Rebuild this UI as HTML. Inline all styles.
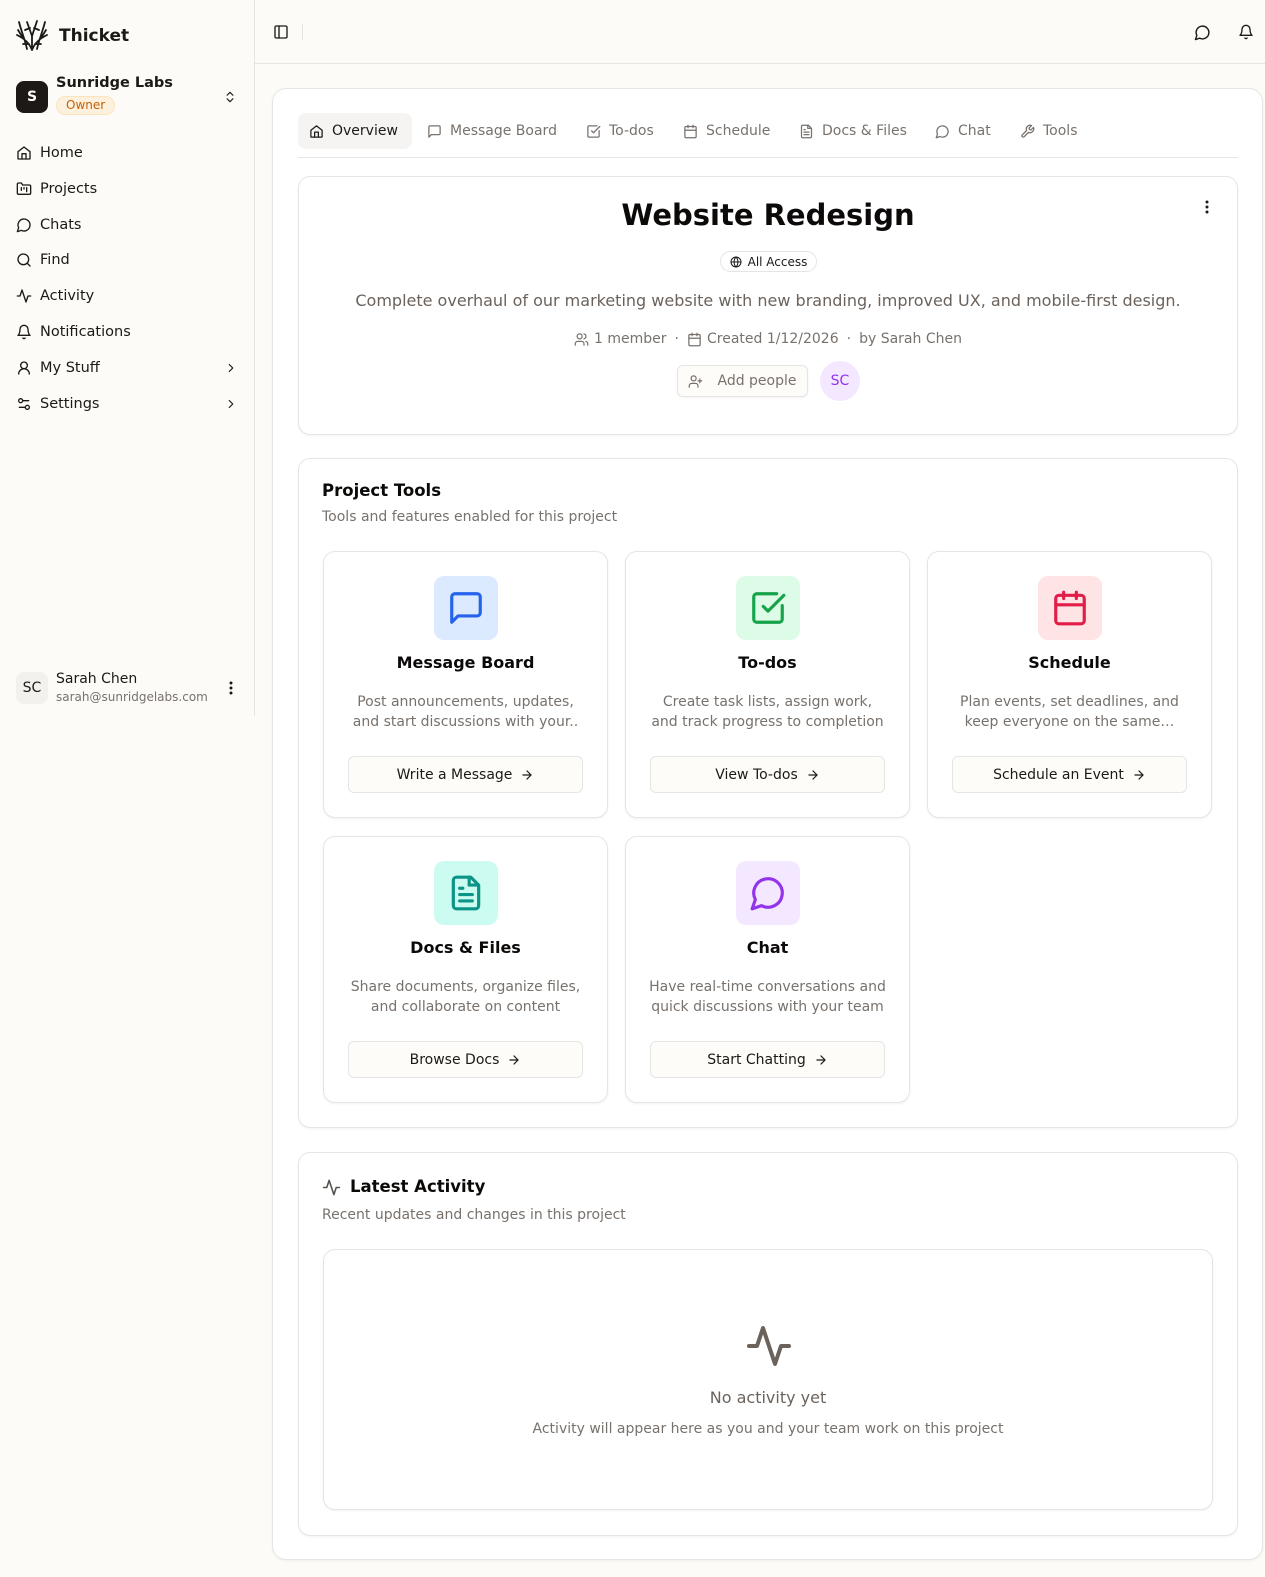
<!DOCTYPE html>
<html><head><meta charset="utf-8"><style>
*{box-sizing:border-box;margin:0;padding:0}
body{width:1265px;height:1577px;background:#fdfbf7;font-family:"DejaVu Sans","Liberation Sans",sans-serif;color:#1c1917;position:relative;overflow:hidden}
.a{position:absolute}
svg{display:block}
.ic{fill:none;stroke:currentColor;stroke-width:2;stroke-linecap:round;stroke-linejoin:round}
.nav{position:absolute;left:16px;display:flex;align-items:center;font-size:14.5px;color:#1c1917;width:222px}
.nav svg{width:16px;height:16px;margin-right:8px}
.nav .chev{position:absolute;right:-8px;width:14px;height:14px}
.tab{position:absolute;top:113px;height:36px;display:flex;align-items:center;font-size:14px;color:#78716c}
.tab svg{width:15px;height:15px;margin-right:8px}
.card{position:absolute;background:#fff;border:1px solid #e7e5e4;border-radius:12px;box-shadow:0 1px 2px rgba(0,0,0,.05)}
.tool{position:absolute;width:285px;height:267px;background:#fff;border:1px solid #e7e5e4;border-radius:12px;box-shadow:0 1px 2px rgba(0,0,0,.06);text-align:center}
.tool .ib{position:absolute;left:110px;top:24px;width:64px;height:64px;border-radius:10px;display:flex;align-items:center;justify-content:center}
.tool .ib svg{width:38px;height:38px}
.tool h3{position:absolute;top:101px;left:0;right:0;font-size:16px;font-weight:bold;color:#0c0a09}
.tool p{position:absolute;top:140px;left:22px;right:22px;font-size:14px;line-height:20px;color:#78716c}
.tool .bt{position:absolute;left:24px;right:24px;top:204px;height:37px;border:1px solid #e7e5e4;border-radius:6px;background:#fefcf8;display:flex;align-items:center;justify-content:center;font-size:14px;color:#1c1917}
.tool .bt svg{width:14px;height:14px;margin-left:8px}
</style></head><body>

<!-- sidebar -->
<div class="a" style="left:254px;top:0;width:1px;height:716px;background:#e7e5e4"></div>
<svg class="a" style="left:15px;top:18px" width="34" height="34" viewBox="0 0 34 34" fill="none" stroke="#1c1917" stroke-width="1.8" stroke-linecap="round"><path d="M17 32 L17 18 M17 32 C14 24 8 20 2 17 M17 32 C20 24 26 20 32 17 M12 31 C10 22 6 12 4 4 M22 31 C24 22 28 12 30 4 M17 18 L12 4 M17 18 L22 3 M8 20 L3 12 M26 20 L31 12 M14 26 L8 26 M20 26 L26 26 M10 12 L15 10 M24 12 L19 10"/></svg>
<div class="a" style="left:59px;top:26px;font-size:17px;font-weight:bold">Thicket</div>
<div class="a" style="left:16px;top:81px;width:32px;height:32px;border-radius:8px;background:#1c1917;color:#fff;font-weight:bold;font-size:14px;display:flex;align-items:center;justify-content:center">S</div>
<div class="a" style="left:56px;top:75px;font-size:14.5px;font-weight:bold">Sunridge Labs</div>
<div class="a" style="left:56px;top:96px;height:19px;padding:0 9px;border-radius:10px;background:#fdf0dc;border:1px solid #fbe3c0;color:#c2610c;font-size:12px;line-height:17px">Owner</div>
<svg class="a ic" style="left:223px;top:89px;color:#1c1917" width="14" height="16" viewBox="0 0 24 24"><path d="M7 9l5-5 5 5M7 15l5 5 5-5"/></svg>

<div class="nav" style="top:145px"><svg class="ic" viewBox="0 0 24 24"><path d="M3 10l9-7 9 7v10a1 1 0 0 1-1 1H4a1 1 0 0 1-1-1z"/><path d="M9 21v-8h6v8"/></svg>Home</div>
<div class="nav" style="top:181px"><svg class="ic" viewBox="0 0 24 24"><path d="M20 20H4a2 2 0 0 1-2-2V5a2 2 0 0 1 2-2h4l2 3h10a2 2 0 0 1 2 2v10a2 2 0 0 1-2 2z"/><path d="M8 10v4M12 10v2M16 10v6"/></svg>Projects</div>
<div class="nav" style="top:217px"><svg class="ic" viewBox="0 0 24 24"><path d="M7.9 20A9 9 0 1 0 4 16.1L2 22z"/></svg>Chats</div>
<div class="nav" style="top:252px"><svg class="ic" viewBox="0 0 24 24"><circle cx="11" cy="11" r="8"/><path d="M21 21l-4.3-4.3"/></svg>Find</div>
<div class="nav" style="top:288px"><svg class="ic" viewBox="0 0 24 24"><path d="M22 12h-4l-3 9L9 3l-3 9H2"/></svg>Activity</div>
<div class="nav" style="top:324px"><svg class="ic" viewBox="0 0 24 24"><path d="M6 8a6 6 0 0 1 12 0c0 7 3 9 3 9H3s3-2 3-9"/><path d="M10.3 21a1.9 1.9 0 0 0 3.4 0"/></svg>Notifications</div>
<div class="nav" style="top:360px"><svg class="ic" viewBox="0 0 24 24"><circle cx="12" cy="8" r="5"/><path d="M20 21a8 8 0 0 0-16 0"/></svg>My Stuff<svg class="ic chev" viewBox="0 0 24 24"><path d="M9 18l6-6-6-6"/></svg></div>
<div class="nav" style="top:396px"><svg class="ic" viewBox="0 0 24 24"><path d="M14 17H5M19 7h-9"/><circle cx="17" cy="17" r="3"/><circle cx="7" cy="7" r="3"/></svg>Settings<svg class="ic chev" viewBox="0 0 24 24"><path d="M9 18l6-6-6-6"/></svg></div>

<div class="a" style="left:16px;top:672px;width:32px;height:32px;border-radius:8px;background:#f3f1ee;font-size:14px;display:flex;align-items:center;justify-content:center">SC</div>
<div class="a" style="left:56px;top:671px;font-size:14px">Sarah Chen</div>
<div class="a" style="left:56px;top:690px;font-size:12px;color:#78716c">sarah@sunridgelabs.com</div>
<svg class="a" style="left:225px;top:680px" width="12" height="16" viewBox="0 0 12 16" fill="#1c1917"><circle cx="6" cy="3" r="1.5"/><circle cx="6" cy="8" r="1.5"/><circle cx="6" cy="13" r="1.5"/></svg>

<!-- header -->
<div class="a" style="left:255px;top:63px;width:1010px;height:1px;background:#e7e5e4"></div>
<svg class="a ic" style="left:273px;top:24px;color:#1c1917" width="16" height="16" viewBox="0 0 24 24"><rect x="3" y="3" width="18" height="18" rx="2"/><path d="M9 3v18"/></svg>
<div class="a" style="left:302px;top:24px;width:1px;height:16px;background:#e7e5e4"></div>
<svg class="a ic" style="left:1194px;top:24px;color:#1c1917" width="17" height="17" viewBox="0 0 24 24"><path d="M7.9 20A9 9 0 1 0 4 16.1L2 22z"/></svg>
<svg class="a ic" style="left:1238px;top:24px;color:#1c1917" width="16" height="16" viewBox="0 0 24 24"><path d="M6 8a6 6 0 0 1 12 0c0 7 3 9 3 9H3s3-2 3-9"/><path d="M10.3 21a1.9 1.9 0 0 0 3.4 0"/></svg>

<!-- outer card -->
<div class="card" style="left:272px;top:88px;width:991px;height:1472px;border-radius:14px"></div>

<div class="a" style="left:298px;top:113px;width:114px;height:36px;border-radius:8px;background:#f5f4f2"></div>
<div class="tab" style="left:309px;color:#1c1917"><svg class="ic" viewBox="0 0 24 24"><path d="M3 10l9-7 9 7v10a1 1 0 0 1-1 1H4a1 1 0 0 1-1-1z"/><path d="M9 21v-8h6v8"/></svg>Overview</div>
<div class="tab" style="left:427px"><svg class="ic" viewBox="0 0 24 24"><path d="M21 15a2 2 0 0 1-2 2H7l-4 4V5a2 2 0 0 1 2-2h14a2 2 0 0 1 2 2z"/></svg>Message Board</div>
<div class="tab" style="left:586px"><svg class="ic" viewBox="0 0 24 24"><path d="M21 10.5V19a2 2 0 0 1-2 2H5a2 2 0 0 1-2-2V5a2 2 0 0 1 2-2h12.5"/><path d="M9 11l3 3L22 4"/></svg>To-dos</div>
<div class="tab" style="left:683px"><svg class="ic" viewBox="0 0 24 24"><rect x="3" y="4" width="18" height="18" rx="2"/><path d="M16 2v4M8 2v4M3 10h18"/></svg>Schedule</div>
<div class="tab" style="left:799px"><svg class="ic" viewBox="0 0 24 24"><path d="M15 2H6a2 2 0 0 0-2 2v16a2 2 0 0 0 2 2h12a2 2 0 0 0 2-2V7z"/><path d="M14 2v5h5M16 13H8M16 17H8M10 9H8"/></svg>Docs &amp; Files</div>
<div class="tab" style="left:935px"><svg class="ic" viewBox="0 0 24 24"><path d="M7.9 20A9 9 0 1 0 4 16.1L2 22z"/></svg>Chat</div>
<div class="tab" style="left:1020px"><svg class="ic" viewBox="0 0 24 24"><path d="M14.7 6.3a1 1 0 0 0 0 1.4l1.6 1.6a1 1 0 0 0 1.4 0l3.8-3.8a6 6 0 0 1-7.9 7.9l-6.9 6.9a2.1 2.1 0 0 1-3-3l6.9-6.9a6 6 0 0 1 7.9-7.9z"/></svg>Tools</div>
<div class="a" style="left:298px;top:157px;width:940px;height:1px;background:#e7e5e4"></div>

<!-- project card -->
<div class="card" style="left:298px;top:176px;width:940px;height:259px"></div>
<div class="a" style="left:298px;top:198px;width:940px;text-align:center;font-size:29px;font-weight:bold;color:#0c0a09">Website Redesign</div>
<svg class="a" style="left:1201px;top:199px" width="12" height="16" viewBox="0 0 12 16" fill="#1c1917"><circle cx="6" cy="3" r="1.5"/><circle cx="6" cy="8" r="1.5"/><circle cx="6" cy="13" r="1.5"/></svg>
<div class="a" style="left:720px;top:251px;width:97px;height:21px;border:1px solid #e7e5e4;border-radius:11px;display:flex;align-items:center;justify-content:center;font-size:12px;color:#1c1917"><svg class="ic" width="12" height="12" viewBox="0 0 24 24" style="margin-right:6px"><circle cx="12" cy="12" r="10"/><path d="M2 12h20M12 2a15 15 0 0 1 0 20 15 15 0 0 1 0-20"/></svg>All Access</div>
<div class="a" style="left:298px;top:291px;width:940px;text-align:center;font-size:16px;color:#6b625b">Complete overhaul of our marketing website with new branding, improved UX, and mobile-first design.</div>
<div class="a" style="left:298px;top:331px;width:940px;display:flex;justify-content:center;align-items:center;font-size:14px;color:#78716c">
<svg class="ic" width="15" height="15" viewBox="0 0 24 24" style="margin-right:5px"><path d="M16 21v-2a4 4 0 0 0-4-4H6a4 4 0 0 0-4 4v2"/><circle cx="9" cy="7" r="4"/><path d="M22 21v-2a4 4 0 0 0-3-3.9M16 3.1a4 4 0 0 1 0 7.8"/></svg>1 member<span style="margin:0 8px">·</span><svg class="ic" width="15" height="15" viewBox="0 0 24 24" style="margin-right:5px"><rect x="3" y="4" width="18" height="18" rx="2"/><path d="M16 2v4M8 2v4M3 10h18"/></svg>Created 1/12/2026<span style="margin:0 8px">·</span>by Sarah Chen</div>
<div class="a" style="left:677px;top:365px;width:131px;height:32px;border:1px solid #e7e5e4;border-radius:6px;background:#fefcf8;display:flex;align-items:center;justify-content:center;font-size:14px;color:#78716c;box-shadow:0 1px 2px rgba(0,0,0,.05)"><svg class="ic" width="15" height="15" viewBox="0 0 24 24" style="margin-right:14px"><circle cx="9" cy="7" r="4"/><path d="M2 21v-2a4 4 0 0 1 4-4h6a4 4 0 0 1 4 4v2M19 8v6M22 11h-6"/></svg>Add people</div>
<div class="a" style="left:820px;top:361px;width:40px;height:40px;border-radius:50%;background:#f3e8ff;color:#9333ea;font-size:14px;display:flex;align-items:center;justify-content:center">SC</div>

<!-- project tools -->
<div class="card" style="left:298px;top:458px;width:940px;height:670px"></div>
<div class="a" style="left:322px;top:481px;font-size:16.5px;font-weight:bold;color:#0c0a09">Project Tools</div>
<div class="a" style="left:322px;top:509px;font-size:14px;color:#78716c">Tools and features enabled for this project</div>

<div class="tool" style="left:323px;top:551px"><div class="ib" style="background:#dbeafe;color:#2563eb"><svg class="ic" viewBox="0 0 24 24"><path d="M21 15a2 2 0 0 1-2 2H7l-4 4V5a2 2 0 0 1 2-2h14a2 2 0 0 1 2 2z"/></svg></div><h3>Message Board</h3><p>Post announcements, updates, and start discussions with your..</p><div class="bt">Write a Message<svg class="ic" viewBox="0 0 24 24"><path d="M5 12h14M12 5l7 7-7 7"/></svg></div></div>
<div class="tool" style="left:625px;top:551px"><div class="ib" style="background:#dcfce7;color:#16a34a"><svg class="ic" viewBox="0 0 24 24"><path d="M21 10.5V19a2 2 0 0 1-2 2H5a2 2 0 0 1-2-2V5a2 2 0 0 1 2-2h12.5"/><path d="M9 11l3 3L22 4"/></svg></div><h3>To-dos</h3><p>Create task lists, assign work, and track progress to completion</p><div class="bt">View To-dos<svg class="ic" viewBox="0 0 24 24"><path d="M5 12h14M12 5l7 7-7 7"/></svg></div></div>
<div class="tool" style="left:927px;top:551px"><div class="ib" style="background:#ffe4e6;color:#e11d48"><svg class="ic" viewBox="0 0 24 24"><rect x="3" y="4" width="18" height="18" rx="2"/><path d="M16 2v4M8 2v4M3 10h18"/></svg></div><h3>Schedule</h3><p>Plan events, set deadlines, and keep everyone on the same…</p><div class="bt">Schedule an Event<svg class="ic" viewBox="0 0 24 24"><path d="M5 12h14M12 5l7 7-7 7"/></svg></div></div>
<div class="tool" style="left:323px;top:836px"><div class="ib" style="background:#ccfbf1;color:#0d9488"><svg class="ic" viewBox="0 0 24 24"><path d="M15 2H6a2 2 0 0 0-2 2v16a2 2 0 0 0 2 2h12a2 2 0 0 0 2-2V7z"/><path d="M14 2v5h5M16 13H8M16 17H8M10 9H8"/></svg></div><h3>Docs &amp; Files</h3><p>Share documents, organize files, and collaborate on content</p><div class="bt">Browse Docs<svg class="ic" viewBox="0 0 24 24"><path d="M5 12h14M12 5l7 7-7 7"/></svg></div></div>
<div class="tool" style="left:625px;top:836px"><div class="ib" style="background:#f3e8ff;color:#9333ea"><svg class="ic" viewBox="0 0 24 24"><path d="M7.9 20A9 9 0 1 0 4 16.1L2 22z"/></svg></div><h3>Chat</h3><p>Have real-time conversations and quick discussions with your team</p><div class="bt">Start Chatting<svg class="ic" viewBox="0 0 24 24"><path d="M5 12h14M12 5l7 7-7 7"/></svg></div></div>

<!-- activity -->
<div class="card" style="left:298px;top:1152px;width:940px;height:384px"></div>
<svg class="a ic" style="left:322px;top:1178px;color:#57534e" width="19" height="19" viewBox="0 0 24 24" stroke-width="1.6"><path d="M22 12h-4l-3 9L9 3l-3 9H2"/></svg>
<div class="a" style="left:350px;top:1177px;font-size:16.5px;font-weight:bold;color:#0c0a09">Latest Activity</div>
<div class="a" style="left:322px;top:1207px;font-size:14px;color:#78716c">Recent updates and changes in this project</div>
<div class="card" style="left:323px;top:1249px;width:890px;height:261px"></div>
<svg class="a ic" style="left:745px;top:1322px;color:#6b625b" width="48" height="48" viewBox="0 0 24 24" stroke-width="1.5"><path d="M22 12h-4l-3 9L9 3l-3 9H2"/></svg>
<div class="a" style="left:323px;top:1388px;width:890px;text-align:center;font-size:16px;color:#6b625b">No activity yet</div>
<div class="a" style="left:323px;top:1421px;width:890px;text-align:center;font-size:14px;color:#78716c">Activity will appear here as you and your team work on this project</div>
</body></html>
